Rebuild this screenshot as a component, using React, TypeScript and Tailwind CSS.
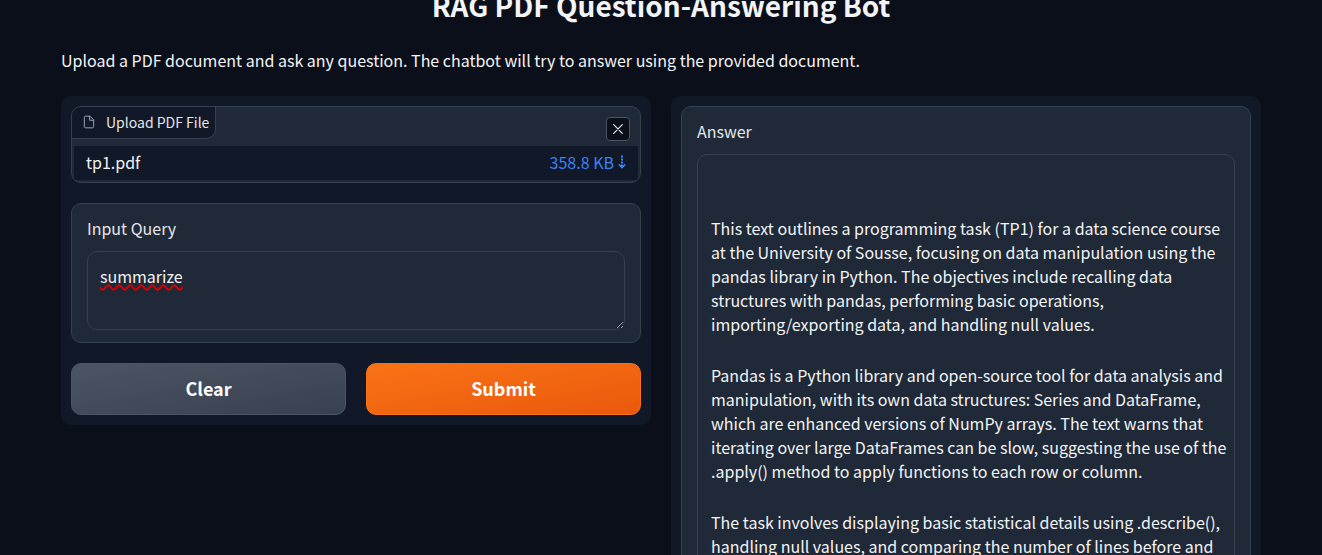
import { useState } from "react";

const initialAnswer = [
  "This text outlines a programming task (TP1) for a data science course at the University of Sousse, focusing on data manipulation using the pandas library in Python. The objectives include recalling data structures with pandas, performing basic operations, importing/exporting data, and handling null values.",
  "Pandas is a Python library and open-source tool for data analysis and manipulation, with its own data structures: Series and DataFrame, which are enhanced versions of NumPy arrays. The text warns that iterating over large DataFrames can be slow, suggesting the use of the .apply() method to apply functions to each row or column.",
  "The task involves displaying basic statistical details using .describe(), handling null values, and comparing the number of lines before and",
];

function FileIcon() {
  return (
    <svg
      aria-hidden="true"
      viewBox="0 0 24 24"
      fill="none"
      stroke="currentColor"
      strokeWidth="1.7"
      strokeLinecap="round"
      strokeLinejoin="round"
      className="size-3.5 text-[#9ca3af]"
    >
      <path d="M13 2H6a2 2 0 0 0-2 2v16a2 2 0 0 0 2 2h12a2 2 0 0 0 2-2V9z" />
      <path d="M13 2v7h7" />
    </svg>
  );
}

function CloseIcon() {
  return (
    <svg
      aria-hidden="true"
      viewBox="0 0 10 10"
      stroke="currentColor"
      strokeWidth="1.2"
      strokeLinecap="round"
      className="size-2.5"
    >
      <path d="M0.7 0.7 9.3 9.3M9.3 0.7 0.7 9.3" />
    </svg>
  );
}

function DownloadArrow() {
  return (
    <svg aria-hidden="true" viewBox="0 0 8 14" fill="none" stroke="currentColor" className="h-3.5 w-2">
      <path d="M4 0.5V12" strokeWidth="2" strokeDasharray="2 1" />
      <path d="M0.8 9.4 4 12.6 7.2 9.4" strokeWidth="1.5" />
    </svg>
  );
}

function UploadBlock() {
  const [attached, setAttached] = useState(true);
  return (
    <section
      aria-label="Upload PDF File"
      className="flex flex-col overflow-hidden rounded-[10px] border border-[#374151] bg-[#1f2937] pb-0.5"
    >
      <div className="flex h-[39px] items-start justify-between">
        <div className="-mt-px -ml-px flex h-[33px] items-center gap-2.5 rounded-br-[10px] border border-[#374151] bg-[#111827] pr-1.5 pb-0.5 pl-2.5 text-sm text-[#e5e7eb]">
          <FileIcon />
          Upload PDF File
        </div>
        <button
          type="button"
          aria-label="Remove file"
          onClick={() => setAttached(false)}
          className="mt-2.5 mr-2.5 flex size-6 items-center justify-center rounded border border-[#4b5563] bg-[#0b0f19] text-[#e5e7eb]"
        >
          <CloseIcon />
        </button>
      </div>
      <div className="mx-0.5 flex h-[34px] items-center justify-between bg-[#111827] pr-3 pb-0.5 pl-3">
        {attached && (
          <>
            <span>tp1.pdf</span>
            <a href="#tp1.pdf" className="flex items-center gap-1 text-[#3b82f6]">
              358.8 KB
              <DownloadArrow />
            </a>
          </>
        )}
      </div>
    </section>
  );
}

export default function App() {
  const [query, setQuery] = useState("summarize");
  const [answer, setAnswer] = useState(initialAnswer);

  return (
    <div className="h-screen overflow-hidden bg-[#0b0f19] font-['Noto_Sans_CJK_SC',sans-serif] text-base leading-6 text-[#f3f4f6]">
      <main className="mx-auto max-w-[1200px]">
        <h1 className="-mt-[18px] text-center text-[28px] leading-[46px] font-bold">
          RAG PDF Question-Answering Bot
        </h1>
        <p className="mt-5">
          Upload a PDF document and ask any question. The chatbot will try to answer using the provided document.
        </p>

        <div className="mt-6 grid grid-cols-2 items-start gap-5">
          <form
            onSubmit={(event) => event.preventDefault()}
            className="flex flex-col gap-5 rounded-[10px] bg-[#111827] p-2.5"
          >
            <UploadBlock />

            <div className="flex flex-col gap-[11px] rounded-[10px] border border-[#374151] bg-[#1f2937] px-[15px] py-3">
              <label htmlFor="query" className="text-[#e5e7eb]">
                Input Query
              </label>
              <textarea
                id="query"
                value={query}
                spellCheck={false}
                onChange={(event) => setQuery(event.target.value)}
                className="h-[79px] resize-y rounded-[10px] border border-[#374151] bg-[#1f2937] px-3 py-3 underline decoration-[#dd0000] decoration-wavy decoration-2 [text-decoration-skip-ink:none] scheme-dark"
              />
            </div>

            <div className="grid grid-cols-2 gap-5 text-lg font-bold text-white">
              <button
                type="button"
                onClick={() => {
                  setQuery("");
                  setAnswer([]);
                }}
                className="h-[52px] rounded-[10px] border border-[#4b5563] bg-linear-to-br from-[#4b5563] to-[#374151] pb-0.5"
              >
                Clear
              </button>
              <button
                type="submit"
                className="h-[52px] rounded-[10px] border border-[#f97316] bg-linear-to-br from-[#f97316] to-[#ea580c] pb-0.5"
              >
                Submit
              </button>
            </div>
          </form>

          <div className="rounded-[10px] bg-[#111827] p-2.5">
            <div className="flex flex-col gap-[11px] rounded-[10px] border border-[#374151] bg-[#1f2937] px-[15px] pt-3 pb-4">
              <label htmlFor="answer" className="text-[#e5e7eb]">
                Answer
              </label>
              <output
                id="answer"
                className="flex min-h-[480px] flex-col gap-[27px] rounded-[10px] border border-[#374151] pt-[61px] pr-1 pb-3 pl-[13px]"
              >
                {answer.map((paragraph) => (
                  <p key={paragraph}>{paragraph}</p>
                ))}
              </output>
            </div>
          </div>
        </div>
      </main>
    </div>
  );
}
